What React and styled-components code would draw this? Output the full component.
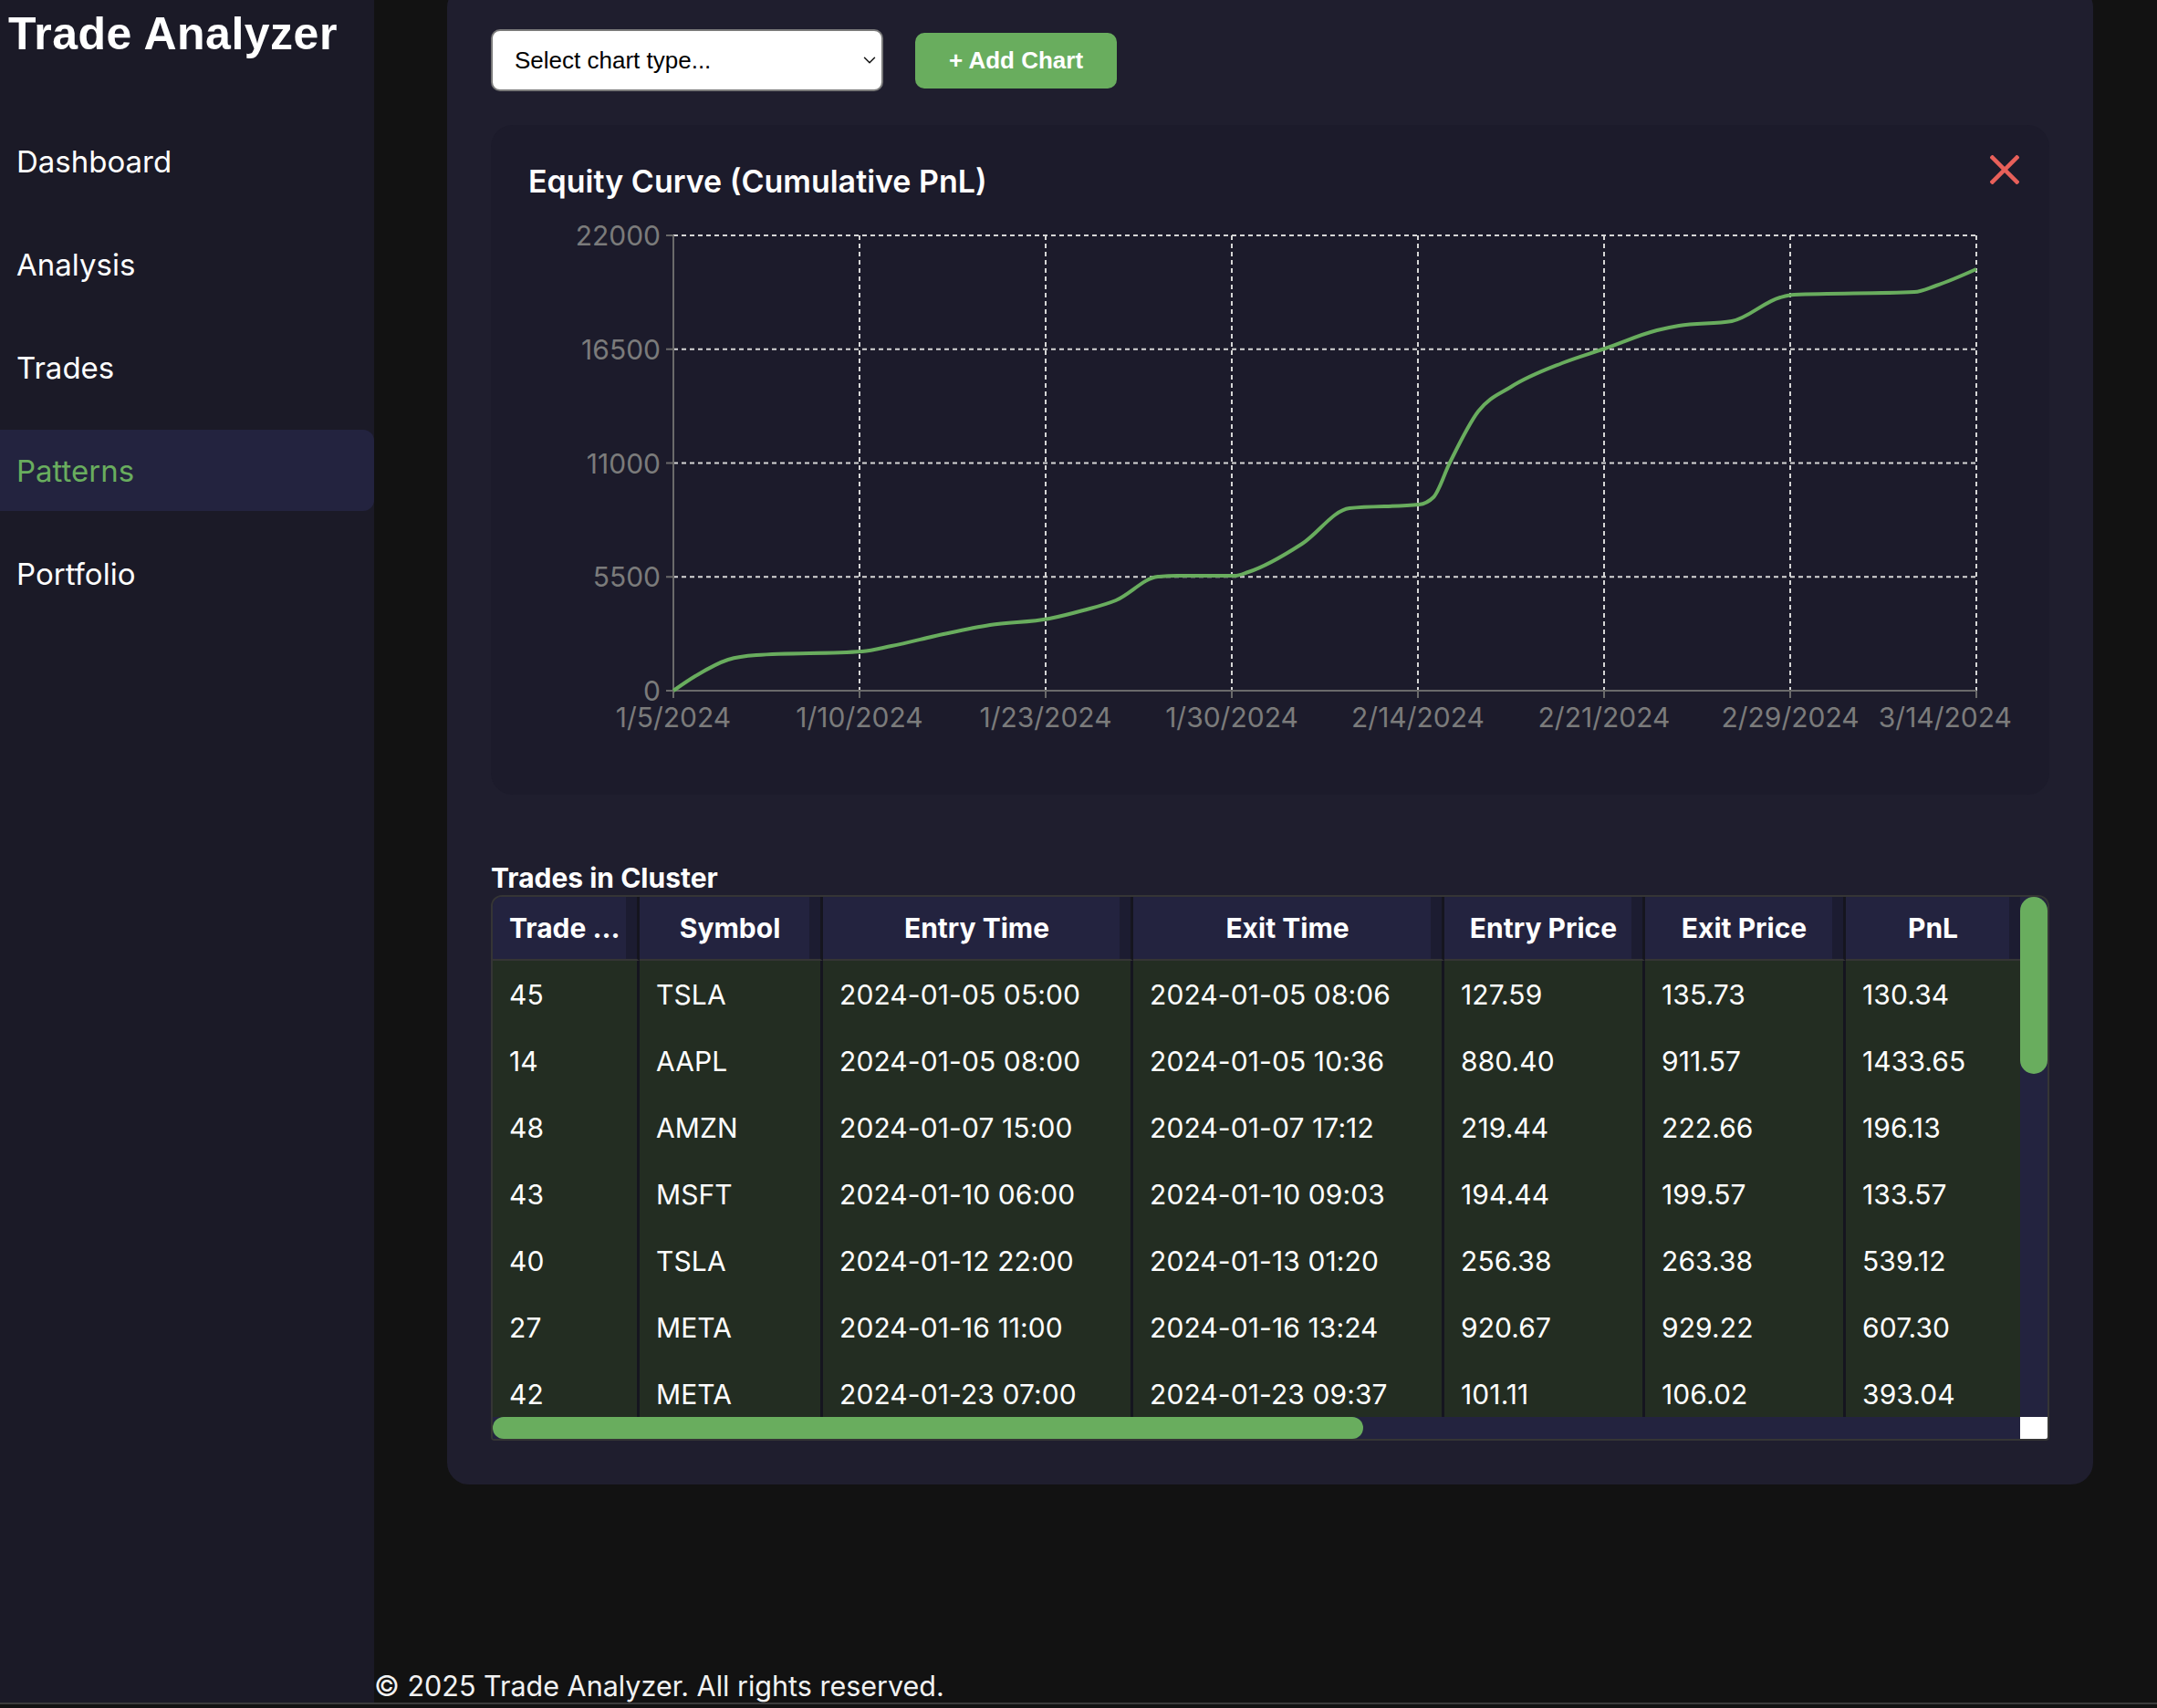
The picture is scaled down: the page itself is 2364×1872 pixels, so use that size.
import React from 'react';
import styled, { createGlobalStyle } from 'styled-components';
import { ChevronDown } from 'lucide-react';

const GlobalStyle = createGlobalStyle`
  html, body { margin: 0; padding: 0; background: #121212; }
  body { font-family: Inter, "Noto Sans", sans-serif; color: #fff; overflow: hidden; }
  * { box-sizing: border-box; }
`;

const Shell = styled.div`
  display: grid;
  grid-template-columns: 410px 1fr;
  height: 1868px;
  border-bottom: 2px solid #3c3c3c;
  overflow: hidden;
`;

const Sidebar = styled.aside`
  background: #1b1a27;
  padding-top: 9px;
  display: flex;
  flex-direction: column;
`;

const Brand = styled.h1`
  margin: 0 0 0 9px;
  font: 700 50px/56px "Liberation Sans", Arial, sans-serif;
  letter-spacing: 0.5px;
  color: #fff;
  white-space: nowrap;
`;

const Nav = styled.nav`
  margin-top: 67px;
  display: flex;
  flex-direction: column;
  gap: 24px;
`;

const NavItem = styled.div`
  height: 89px;
  display: flex;
  align-items: center;
  padding-left: 18px;
  font: 400 33px Inter, sans-serif;
  color: ${p => (p.$active ? '#69ad5e' : '#fff')};
  background: ${p => (p.$active ? '#23233f' : 'transparent')};
  border-radius: 0 12px 12px 0;
`;

const Main = styled.main`
  display: flex;
  flex-direction: column;
  min-width: 0;
`;

const Panel = styled.section`
  margin: -16px 0 0 80px;
  width: 1804px;
  padding: 48px;
  background: #1f1e2e;
  border-radius: 24px;
`;

const Controls = styled.div`
  display: flex;
  align-items: center;
  gap: 35px;
  height: 68px;
`;

const SelectWrap = styled.div`
  position: relative;
  width: 430px;
  height: 68px;
`;

const Select = styled.select`
  appearance: none;
  width: 100%;
  height: 100%;
  background: #fff;
  border: 2px solid #7a7a7a;
  border-radius: 10px;
  padding: 0 40px 0 24px;
  font: 400 26px "Liberation Sans", Arial, sans-serif;
  color: #000;
`;

const Chevron = styled.span`
  position: absolute;
  right: 4px;
  top: 50%;
  transform: translateY(-50%);
  display: flex;
  color: #111;
  pointer-events: none;
`;

const AddButton = styled.button`
  width: 221px;
  height: 61px;
  border: none;
  border-radius: 10px;
  background: #69ad5e;
  color: #fff;
  font: 700 26px "Liberation Sans", Arial, sans-serif;
`;

const ChartCard = styled.div`
  position: relative;
  margin-top: 37px;
  background: #1c1b2b;
  border-radius: 24px;
  padding: 42px 40px 40px 41px;
`;

const ChartTitle = styled.h3`
  margin: 0;
  font: 600 34px/40px Inter, sans-serif;
  color: #fff;
`;

const CloseButton = styled.button`
  position: absolute;
  top: 33px;
  right: 33px;
  width: 32px;
  height: 32px;
  padding: 0;
  border: none;
  background: transparent;
  display: flex;
`;

const ChartSvg = styled.svg`
  display: block;
`;

const SectionTitle = styled.h3`
  margin: 73px 0 1px;
  font: 700 30px/36px Inter, sans-serif;
  color: #fff;
`;

const TableFrame = styled.div`
  height: 598px;
  border: 2px solid #353535;
  border-radius: 12px 12px 4px 4px;
  overflow: hidden;
  display: grid;
  grid-template-columns: 1fr 30px;
  grid-template-rows: 1fr 24px;
`;

const Viewport = styled.div`
  overflow: hidden;
  min-width: 0;
  min-height: 0;
`;

const VTrack = styled.div`
  background: #23233f;
`;

const VThumb = styled.div`
  height: ${p => p.$size}px;
  background: #69ad5e;
  border-radius: 15px;
`;

const HTrack = styled.div`
  background: #23233f;
`;

const HThumb = styled.div`
  width: ${p => p.$size}px;
  height: 100%;
  background: #69ad5e;
  border-radius: 12px;
`;

const Corner = styled.div`
  background: #fff;
`;

const Table = styled.table`
  border-collapse: separate;
  border-spacing: 0;
  table-layout: fixed;
  width: ${p => p.$w}px;
`;

const Col = styled.col`
  width: ${p => p.$w}px;
`;

const Th = styled.th`
  height: 70px;
  padding: 0 18px;
  background: #23233f;
  border-bottom: 2px solid #353535;
  border-right: 3px solid #15151f;
  box-shadow: inset -12px 0 0 #1c1c31;
  font: 700 30px Inter, sans-serif;
  color: #fff;
  text-align: center;
  white-space: nowrap;
  overflow: hidden;
  text-overflow: ellipsis;
`;

const Td = styled.td`
  height: 73px;
  padding: 0 18px;
  background: #232d22;
  border-right: 3px solid #15151f;
  font: 400 30px Inter, sans-serif;
  letter-spacing: 0.1px;
  color: #fff;
  white-space: nowrap;
  overflow: hidden;
`;

const Footer = styled.footer`
  margin-top: auto;
  font: 400 30.5px/36px Inter, sans-serif;
  color: #f2f2f2;
  white-space: nowrap;
`;

const navItems = ['Dashboard', 'Analysis', 'Trades', 'Patterns', 'Portfolio'];

const columns = [
  { key: 'id', label: 'Trade Number', w: 161 },
  { key: 'sym', label: 'Symbol', w: 201 },
  { key: 'entry', label: 'Entry Time', w: 340 },
  { key: 'exit', label: 'Exit Time', w: 341 },
  { key: 'ep', label: 'Entry Price', w: 220 },
  { key: 'xp', label: 'Exit Price', w: 220 },
  { key: 'pnl', label: 'PnL', w: 194 },
  { key: 'qty', label: 'Quantity', w: 200 },
  { key: 'side', label: 'Side', w: 160 },
  { key: 'dur', label: 'Duration', w: 220 },
  { key: 'ret', label: 'Return %', w: 220 },
  { key: 'strat', label: 'Strategy', w: 460 },
];
const tableWidth = columns.reduce((a, c) => a + c.w, 0);

const rawTrades = [
  [45, 'TSLA', '2024-01-05 05:00', '2024-01-05 08:06', '127.59', '135.73', '130.34'],
  [14, 'AAPL', '2024-01-05 08:00', '2024-01-05 10:36', '880.40', '911.57', '1433.65'],
  [48, 'AMZN', '2024-01-07 15:00', '2024-01-07 17:12', '219.44', '222.66', '196.13'],
  [43, 'MSFT', '2024-01-10 06:00', '2024-01-10 09:03', '194.44', '199.57', '133.57'],
  [40, 'TSLA', '2024-01-12 22:00', '2024-01-13 01:20', '256.38', '263.38', '539.12'],
  [27, 'META', '2024-01-16 11:00', '2024-01-16 13:24', '920.67', '929.22', '607.30'],
  [42, 'META', '2024-01-23 07:00', '2024-01-23 09:37', '101.11', '106.02', '393.04'],
  [31, 'NVDA', '2024-01-25 14:00', '2024-01-25 16:45', '612.30', '628.84', '661.60'],
  [8, 'AAPL', '2024-01-28 09:00', '2024-01-28 11:10', '185.12', '190.44', '425.60'],
  [19, 'GOOG', '2024-01-30 13:00', '2024-01-30 15:22', '142.77', '143.10', '33.00'],
  [36, 'AMZN', '2024-02-03 10:00', '2024-02-03 12:48', '171.25', '179.90', '865.00'],
  [22, 'TSLA', '2024-02-08 16:00', '2024-02-08 18:30', '188.60', '200.05', '1145.00'],
  [11, 'MSFT', '2024-02-14 08:00', '2024-02-14 10:05', '405.20', '406.10', '90.00'],
  [50, 'NVDA', '2024-02-16 12:00', '2024-02-16 14:40', '726.13', '781.52', '2769.50'],
  [5, 'META', '2024-02-18 07:00', '2024-02-18 09:15', '473.28', '491.66', '1102.80'],
  [29, 'AAPL', '2024-02-21 11:00', '2024-02-21 13:33', '182.32', '186.95', '926.00'],
  [17, 'GOOG', '2024-02-24 15:00', '2024-02-24 17:02', '145.29', '149.87', '687.00'],
  [38, 'AMZN', '2024-02-27 09:00', '2024-02-27 11:44', '173.54', '174.40', '86.00'],
  [2, 'TSLA', '2024-02-29 06:00', '2024-02-29 08:21', '201.88', '211.03', '915.00'],
  [24, 'MSFT', '2024-03-05 10:00', '2024-03-05 12:19', '402.65', '403.20', '55.00'],
  [33, 'META', '2024-03-10 13:00', '2024-03-10 15:50', '495.12', '501.74', '331.00'],
  [47, 'NVDA', '2024-03-14 08:00', '2024-03-14 10:27', '878.36', '908.90', '916.20'],
];

const trades = rawTrades.map((r, i) => ({
  id: r[0], sym: r[1], entry: r[2], exit: r[3], ep: r[4], xp: r[5], pnl: r[6],
  qty: String(10 + ((i * 7) % 40)),
  side: i % 3 === 0 ? 'Short' : 'Long',
  dur: `${2 + (i % 3)}h ${10 + ((i * 13) % 50)}m`,
  ret: `${((parseFloat(r[5]) / parseFloat(r[4]) - 1) * 100).toFixed(2)}%`,
  strat: i % 2 ? 'Momentum Breakout' : 'Mean Reversion',
}));

// scroll geometry of the trades grid (viewport vs. content)
const VIEW_W = 1674;
const VIEW_H = 570;
const CONTENT_H = 70 + trades.length * 73;
const vThumb = Math.round((VIEW_H * VIEW_H) / CONTENT_H);
const hThumb = Math.round((VIEW_W * VIEW_W) / tableWidth);

// chart geometry (svg coordinates)
const W = 1627;
const H = 612;
const L = 159;
const R = 1587;
const T = 39;
const B = 538;
const xTicks = ['1/5/2024', '1/10/2024', '1/23/2024', '1/30/2024', '2/14/2024', '2/21/2024', '2/29/2024', '3/14/2024'];
const yTicks = [0, 5500, 11000, 16500, 22000];
const xAt = i => L + (i * (R - L)) / 7;
const yAt = v => B - ((B - T) * v) / 22000;

const curvePts = [
  [159, 538], [183, 522], [219, 504], [250, 499], [366, 495], [398, 489], [455, 476],
  [506, 466], [571, 459], [608, 450], [644, 439], [690, 413], [711, 412], [774, 412],
  [789, 408], [848, 377], [900, 338], [976, 334], [992, 326], [1010, 288], [1041, 232],
  [1077, 205], [1133, 179], [1180, 163], [1237, 143], [1261, 138], [1319, 133],
  [1372, 107], [1387, 104], [1519, 101], [1543, 94], [1587, 76],
];

function monotonePath(pts) {
  const n = pts.length;
  const xs = pts.map(p => p[0]);
  const ys = pts.map(p => p[1]);
  const h = [];
  const s = [];
  for (let i = 0; i < n - 1; i++) {
    h[i] = xs[i + 1] - xs[i];
    s[i] = (ys[i + 1] - ys[i]) / h[i];
  }
  const t = new Array(n).fill(0);
  for (let i = 1; i < n - 1; i++) {
    const p = (s[i - 1] * h[i] + s[i] * h[i - 1]) / (h[i - 1] + h[i]);
    t[i] = (Math.sign(s[i - 1]) + Math.sign(s[i])) *
      Math.min(Math.abs(s[i - 1]), Math.abs(s[i]), 0.5 * Math.abs(p)) || 0;
  }
  t[0] = (3 * s[0] - t[1]) / 2;
  t[n - 1] = (3 * s[n - 2] - t[n - 2]) / 2;
  let d = `M${xs[0]},${ys[0]}`;
  for (let i = 0; i < n - 1; i++) {
    const dx = h[i] / 3;
    d += ` C${xs[i] + dx},${ys[i] + dx * t[i]} ${xs[i + 1] - dx},${ys[i + 1] - dx * t[i + 1]} ${xs[i + 1]},${ys[i + 1]}`;
  }
  return d;
}

const gridColor = '#d6d6d6';
const axisColor = '#6a6a6a';
const labelColor = '#7b7b7b';

function EquityChart() {
  return (
    <ChartSvg width={W} height={H} viewBox={`0 0 ${W} ${H}`}>
      {yTicks.filter(v => v > 0).map(v => (
        <line key={`h${v}`} x1={L} x2={R} y1={yAt(v)} y2={yAt(v)} stroke={gridColor} strokeWidth="2" strokeDasharray="5 4" />
      ))}
      {xTicks.map((_, i) => i > 0 && (
        <line key={`v${i}`} x1={xAt(i)} x2={xAt(i)} y1={T} y2={B} stroke={gridColor} strokeWidth="2" strokeDasharray="5 4" />
      ))}
      <line x1={L} x2={L} y1={T} y2={B} stroke={axisColor} strokeWidth="2" />
      <line x1={L} x2={R} y1={B} y2={B} stroke={axisColor} strokeWidth="2" />
      {yTicks.map(v => (
        <g key={`yl${v}`}>
          <line x1={L - 8} x2={L} y1={yAt(v)} y2={yAt(v)} stroke={axisColor} strokeWidth="2" />
          <text x={L - 14} y={yAt(v)} fill={labelColor} fontFamily="Inter, sans-serif" fontSize="30" textAnchor="end" dominantBaseline="central">{v}</text>
        </g>
      ))}
      {xTicks.map((lab, i) => (
        <g key={`xl${i}`}>
          <line x1={xAt(i)} x2={xAt(i)} y1={B} y2={B + 8} stroke={axisColor} strokeWidth="2" />
          <text
            x={i === 7 ? 1626 : xAt(i)}
            y={567}
            fill={labelColor}
            fontFamily="Inter, sans-serif"
            fontSize="30"
            textAnchor={i === 7 ? 'end' : 'middle'}
            dominantBaseline="central"
          >
            {lab}
          </text>
        </g>
      ))}
      <path d={monotonePath(curvePts)} fill="none" stroke="#69ad5e" strokeWidth="4" strokeLinejoin="round" />
    </ChartSvg>
  );
}

export default function App() {
  return (
    <>
      <GlobalStyle />
      <Shell>
        <Sidebar>
          <Brand>Trade Analyzer</Brand>
          <Nav>
            {navItems.map(n => (
              <NavItem key={n} $active={n === 'Patterns'}>{n}</NavItem>
            ))}
          </Nav>
        </Sidebar>
        <Main>
          <Panel>
            <Controls>
              <SelectWrap>
                <Select defaultValue="">
                  <option value="">Select chart type...</option>
                  <option value="equity">Equity Curve</option>
                  <option value="pnl">PnL Distribution</option>
                </Select>
                <Chevron><ChevronDown size={22} strokeWidth={1.6} /></Chevron>
              </SelectWrap>
              <AddButton>+ Add Chart</AddButton>
            </Controls>
            <ChartCard>
              <ChartTitle>Equity Curve (Cumulative PnL)</ChartTitle>
              <CloseButton aria-label="Remove chart">
                <svg width="32" height="32" viewBox="0 0 32 32">
                  <line x1="1" y1="1" x2="31" y2="31" stroke="#e8605a" strokeWidth="4.5" />
                  <line x1="31" y1="1" x2="1" y2="31" stroke="#e8605a" strokeWidth="4.5" />
                </svg>
              </CloseButton>
              <EquityChart />
            </ChartCard>
            <SectionTitle>Trades in Cluster</SectionTitle>
            <TableFrame>
              <Viewport>
                <Table $w={tableWidth}>
                  <colgroup>
                    {columns.map(c => <Col key={c.key} $w={c.w} />)}
                  </colgroup>
                  <thead>
                    <tr>
                      {columns.map(c => <Th key={c.key}>{c.label}</Th>)}
                    </tr>
                  </thead>
                  <tbody>
                    {trades.map(t => (
                      <tr key={t.id}>
                        {columns.map(c => <Td key={c.key}>{t[c.key]}</Td>)}
                      </tr>
                    ))}
                  </tbody>
                </Table>
              </Viewport>
              <VTrack><VThumb $size={vThumb} /></VTrack>
              <HTrack><HThumb $size={hThumb} /></HTrack>
              <Corner />
            </TableFrame>
          </Panel>
          <Footer>© 2025 Trade Analyzer. All rights reserved.</Footer>
        </Main>
      </Shell>
    </>
  );
}
